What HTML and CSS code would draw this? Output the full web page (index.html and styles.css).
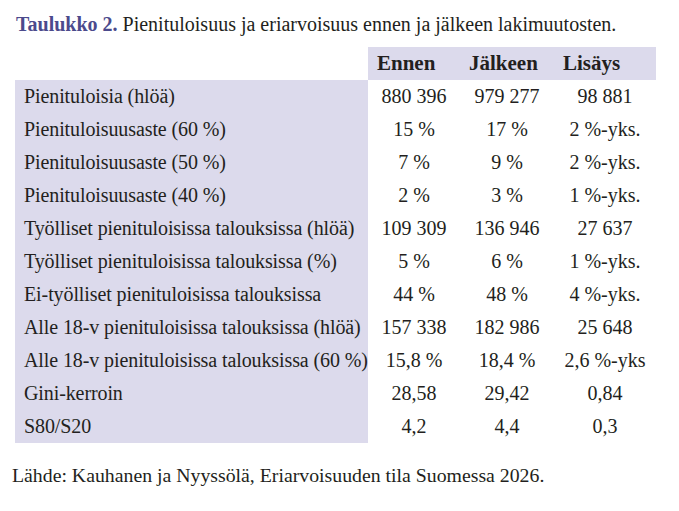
FILE: index.html
```html
<!DOCTYPE html>
<html lang="fi">
<head>
<meta charset="utf-8">
<title>Taulukko 2</title>
<link rel="stylesheet" href="styles.css">
</head>
<body>
<div class="page">
  <p class="caption"><span class="caption-label">Taulukko 2.</span> Pienituloisuus ja eriarvoisuus ennen ja jälkeen lakimuutosten.</p>
  <div class="table">
    <div class="head blank"></div>
    <div class="head">Ennen</div>
    <div class="head">Jälkeen</div>
    <div class="head">Lisäys</div>

    <div class="label">Pienituloisia (hlöä)</div>
    <div class="num">880 396</div><div class="num">979 277</div><div class="num">98 881</div>

    <div class="label">Pienituloisuusaste (60 %)</div>
    <div class="num">15 %</div><div class="num">17 %</div><div class="num">2 %-yks.</div>

    <div class="label">Pienituloisuusaste (50 %)</div>
    <div class="num">7 %</div><div class="num">9 %</div><div class="num">2 %-yks.</div>

    <div class="label">Pienituloisuusaste (40 %)</div>
    <div class="num">2 %</div><div class="num">3 %</div><div class="num">1 %-yks.</div>

    <div class="label">Työlliset pienituloisissa talouksissa (hlöä)</div>
    <div class="num">109 309</div><div class="num">136 946</div><div class="num">27 637</div>

    <div class="label">Työlliset pienituloisissa talouksissa (%)</div>
    <div class="num">5 %</div><div class="num">6 %</div><div class="num">1 %-yks.</div>

    <div class="label">Ei-työlliset pienituloisissa talouksissa</div>
    <div class="num">44 %</div><div class="num">48 %</div><div class="num">4 %-yks.</div>

    <div class="label">Alle 18-v pienituloisissa talouksissa (hlöä)</div>
    <div class="num">157 338</div><div class="num">182 986</div><div class="num">25 648</div>

    <div class="label">Alle 18-v pienituloisissa talouksissa (60 %)</div>
    <div class="num">15,8 %</div><div class="num">18,4 %</div><div class="num">2,6 %-yks</div>

    <div class="label">Gini-kerroin</div>
    <div class="num">28,58</div><div class="num">29,42</div><div class="num">0,84</div>

    <div class="label">S80/S20</div>
    <div class="num">4,2</div><div class="num">4,4</div><div class="num">0,3</div>
  </div>
  <p class="source">Lähde: Kauhanen ja Nyyssölä, Eriarvoisuuden tila Suomessa 2026.</p>
</div>
</body>
</html>
```

FILE: styles.css
```css
html, body {
  margin: 0;
  padding: 0;
  background: #ffffff;
}

.page {
  padding: 12px 0 0 15px;
  font-family: "Liberation Serif", "Times New Roman", serif;
  color: #231f20;
  font-variant-numeric: oldstyle-nums;
}

.caption {
  margin: 0 0 0 1px;
  font-size: 20px;
  line-height: 24px;
}

.caption-label {
  color: #4b4a8c;
  font-weight: bold;
}

.table {
  margin-top: 11px;
  display: grid;
  grid-template-columns: 353px 92px 94px 102px;
  grid-auto-rows: 33px;
  font-size: 20px;
  white-space: nowrap;
}

.head {
  background: #dcdaec;
  font-weight: bold;
  font-size: 21px;
  display: flex;
  align-items: center;
  padding-left: 9px;
}

.head.blank {
  background: transparent;
}

.label {
  background: #dcdaec;
  display: flex;
  align-items: center;
  padding-left: 9px;
  letter-spacing: -0.1px;
}

.num {
  display: flex;
  align-items: center;
  justify-content: center;
}

.source {
  margin: 20px 0 0 -3px;
  font-size: 19.8px;
  line-height: 24px;
}
```
